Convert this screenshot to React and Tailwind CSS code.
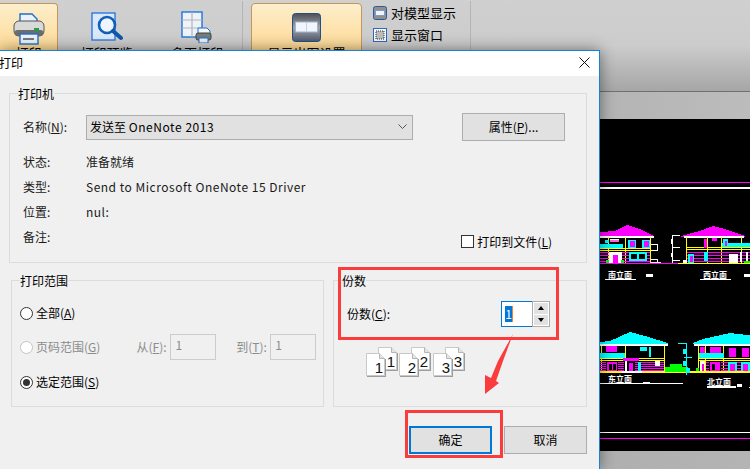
const K = ({ c }) => <span className="underline">{c}</span>;

function PrinterIcon() {
  return (
    <svg width="32" height="32" viewBox="0 0 32 32">
      <path d="M7 1h12l5 5v8H7z" fill="#eaf2fc" stroke="#1f6fd0" strokeWidth="1.4" />
      <rect x="1" y="8" width="30" height="15" rx="5" fill="#d9d9d9" stroke="#555" />
      <rect x="1.5" y="17" width="29" height="6" rx="3" fill="#6c6c6c" />
      <rect x="21" y="15" width="5" height="3" fill="#22a045" />
      <rect x="7" y="21" width="18" height="10" fill="#eaf2fc" stroke="#1f6fd0" strokeWidth="1.4" />
      <rect x="10" y="25" width="11" height="2" fill="#777" />
    </svg>
  );
}

function PreviewIcon() {
  return (
    <svg width="32" height="30" viewBox="0 0 32 30">
      <rect x="1" y="1" width="23" height="27" fill="#dbe8fb" stroke="#1f74dc" strokeWidth="1.3" />
      <circle cx="16" cy="13" r="8" fill="#eef5fe" stroke="#1060b8" strokeWidth="2.6" />
      <path d="M22 19l8 7" stroke="#1058a8" strokeWidth="4" strokeLinecap="round" />
    </svg>
  );
}

function PagesIcon() {
  return (
    <svg width="32" height="32" viewBox="0 0 32 32">
      <rect x="1" y="1" width="20" height="25" fill="#eef3fa" stroke="#1f74dc" strokeWidth="1.4" />
      <path d="M1 9h20M1 17h20M11 1v25" stroke="#b5b5b5" strokeWidth="1.2" />
      <path d="M17 17h9l3 3v5H17z" fill="#f4f7fc" stroke="#1f6fd0" />
      <rect x="15" y="22" width="15" height="7" rx="2" fill="#7a7a7a" stroke="#444" />
      <rect x="18" y="27" width="9" height="5" fill="#e8f0fb" stroke="#1f6fd0" />
      <rect x="26" y="24" width="2" height="1" fill="#22c045" />
    </svg>
  );
}

function DisplayIcon() {
  return (
    <svg width="29" height="29" viewBox="0 0 29 29">
      <defs>
        <linearGradient id="dg" x1="0" y1="0" x2="0" y2="1">
          <stop offset="0" stopColor="#4a4f57" />
          <stop offset="0.5" stopColor="#a5a5a5" />
          <stop offset="1" stopColor="#4e5a6e" />
        </linearGradient>
      </defs>
      <rect x="0.5" y="0.5" width="28" height="28" rx="3" fill="url(#dg)" stroke="#1f4f8f" />
      <rect x="3.5" y="9" width="22" height="10" fill="#f2f5fb" stroke="#9db4d8" />
      <path d="M14.5 9v10" stroke="#c3d0e6" />
    </svg>
  );
}

function SmallModelIcon() {
  return (
    <svg width="14" height="14" viewBox="0 0 14 14">
      <rect x="0.5" y="0.5" width="13" height="13" rx="2" fill="#8f8f8f" stroke="#2a5a9a" />
      <rect x="2.5" y="4.5" width="9" height="5" fill="#f2f5fb" stroke="#7f9cc8" />
    </svg>
  );
}

function SmallWindowIcon() {
  return (
    <svg width="14" height="14" viewBox="0 0 14 14">
      <rect x="0.5" y="0.5" width="13" height="13" fill="#f5f8fd" stroke="#2a6ac0" />
      <rect x="3" y="3" width="8" height="8" fill="#bdbdbd" stroke="#333" strokeDasharray="1 1" />
    </svg>
  );
}

function RibbonButton({ icon, label, active, className }) {
  return (
    <div className={"flex flex-col items-center shrink-0 " + className + (active ? " border border-[#c4985a] rounded-[4px] bg-gradient-to-b from-[#fdeecb] to-[#fdcf78]" : "")}>
      {icon}
      <span className="text-[13px] leading-[16px] text-black whitespace-nowrap">{label}</span>
    </div>
  );
}

function Ribbon() {
  return (
    <div className="h-[92px] flex border-b border-[#707070] bg-gradient-to-b from-[#d0d0d0] via-[#cccccc] to-[#a6a6a6]">
      <RibbonButton active className="w-[58px] h-[70px] mt-[3px] border-l-0 rounded-l-none pt-[9px]" icon={<div className="h-[32px]"><PrinterIcon /></div>} label="打印" />
      <RibbonButton className="w-[99px] pt-[12px] gap-[3px] pr-[2px]" icon={<div className="h-[30px] w-[32px]"><PreviewIcon /></div>} label="打印预览" />
      <RibbonButton className="w-[80px] pt-[11px] gap-[2px]" icon={<div className="h-[32px] w-[32px]"><PagesIcon /></div>} label="多页打印" />
      <div className="w-px h-[86px] ml-[5px] mt-px bg-[#b4b4b4]" />
      <RibbonButton active className="w-[111px] h-[70px] mt-[3px] ml-[8px] pt-[9px] gap-[3px]" icon={<div className="h-[29px]"><DisplayIcon /></div>} label="显示出图设置" />
      <div className="ml-[11px] pt-[5px] flex flex-col gap-[6px] text-[13px] leading-[16px] text-black w-[97px]">
        <div className="flex items-center gap-[4px] whitespace-nowrap"><SmallModelIcon /><span>对模型显示</span></div>
        <div className="flex items-center gap-[4px] whitespace-nowrap"><SmallWindowIcon /><span>显示窗口</span></div>
      </div>
      <div className="w-px h-[86px] mt-px bg-[#b4b4b4]" />
    </div>
  );
}

function CadDrawing() {
  const upper = [
    [0, 63, 150, 1, "#ff00ff"], [0, 68, 150, 2, "#ffffff"], [0, 313, 150, 1, "#ffffff"], [0, 319, 150, 1, "#ff00ff"],
    [0, 117, 54, 2, "#ffffff"], [8, 118, 1, 26, "#ffff00"], [25, 118, 1, 26, "#ffff00"], [50, 118, 1, 26, "#ffff00"],
    [0, 125, 23, 4, "#00ffff"], [0, 129, 51, 1, "#ffff00"], [0, 131, 51, 1, "#ffff00"],
    [0, 133, 50, 1, "#ff00ff"], [0, 136, 50, 1, "#ff00ff"], [0, 139, 50, 1, "#ff00ff"], [0, 142, 50, 1, "#ff00ff"],
    [0, 144, 148, 1, "#ff00ff"], [5, 121, 4, 3, "#00ffff"], [10, 120, 9, 3, "#ff66cc"], [10, 120, 9, 1, "#ffffff"],
    [28, 121, 8, 8, "#00ffff"], [30, 122, 5, 6, "#ff00ff"], [42, 121, 8, 8, "#00ffff"], [44, 122, 5, 6, "#ff00ff"],
    [9, 133, 13, 11, "#ffffff"], [13, 136, 5, 8, "#ff00ff"], [29, 133, 18, 9, "#00ffff"], [31, 135, 6, 5, "#000000"], [39, 135, 6, 5, "#000000"],
    [51, 125, 7, 1, "#ffffff"], [57, 125, 1, 7, "#ffffff"], [51, 131, 7, 1, "#ffffff"], [51, 140, 7, 1, "#ffffff"], [57, 140, 1, 4, "#ffffff"],
    [51, 143, 10, 1, "#ffffff"], [6, 141, 3, 3, "#00ff00"], [21, 141, 3, 3, "#00ff00"],
    [72, 116, 8, 1, "#ffffff"], [72, 116, 1, 28, "#ffffff"], [72, 128, 8, 1, "#ffffff"], [72, 141, 8, 1, "#ffffff"], [71, 120, 2, 5, "#ffffff"], [71, 134, 2, 4, "#ffffff"],
    [84, 117, 60, 2, "#ffffff"], [86, 118, 1, 26, "#ffff00"], [107, 118, 1, 26, "#ffff00"], [121, 118, 1, 26, "#ffff00"], [141, 118, 1, 26, "#ffff00"],
    [87, 128, 63, 1, "#ffff00"], [87, 130, 63, 1, "#ffff00"], [122, 124, 28, 4, "#00ffff"],
    [87, 133, 63, 1, "#ff00ff"], [87, 136, 63, 1, "#ff00ff"], [87, 139, 63, 1, "#ff00ff"], [87, 142, 63, 1, "#ff00ff"], [78, 144, 72, 1, "#ffff00"],
    [104, 120, 3, 9, "#ff00ff"], [112, 119, 5, 3, "#ff00ff"], [123, 120, 5, 7, "#00ffff"], [125, 122, 2, 5, "#ff00ff"],
    [88, 135, 6, 9, "#00ffff"], [90, 137, 3, 6, "#ff00ff"], [104, 133, 4, 9, "#00ffff"], [129, 135, 9, 9, "#ffffff"],
    [83, 141, 4, 3, "#ffffff"], [140, 133, 2, 10, "#ffffff"], [146, 133, 2, 10, "#ffffff"], [144, 142, 6, 2, "#00ff00"],
    [5, 160, 31, 1, "#ffffff"], [46, 155, 7, 3, "#ffffff"], [100, 160, 31, 1, "#ffffff"], [144, 155, 6, 3, "#ffffff"],
    [0, 264, 83, 1, "#ffffff"], [43, 263, 7, 2, "#ffffff"], [107, 267, 29, 2, "#ffffff"], [137, 265, 5, 3, "#ffffff"], [149, 268, 1, 1, "#ffffff"],
  ];
  const lower = [
    [0, 243, 68, 2, "#ffffff"], [1, 245, 1, 27, "#ffff00"], [25, 245, 1, 27, "#ffff00"], [64, 245, 1, 27, "#ffff00"],
    [0, 252, 25, 5, "#00ffff"], [0, 257, 65, 1, "#ffff00"], [0, 259, 65, 1, "#ffff00"],
    [0, 261, 64, 1, "#ff00ff"], [0, 263, 64, 1, "#ff00ff"], [0, 265, 64, 1, "#ff00ff"], [0, 267, 64, 1, "#ff00ff"], [0, 269, 64, 1, "#ff00ff"],
    [0, 270, 150, 2, "#ffff00"], [6, 245, 11, 6, "#ff00ff"], [40, 246, 7, 4, "#00ffff"], [49, 246, 2, 10, "#00ffff"],
    [6, 260, 12, 10, "#000000"], [7, 261, 10, 9, "#ff00ff"], [9, 263, 3, 6, "#000000"], [13, 263, 3, 6, "#000000"],
    [23, 257, 16, 3, "#ff00ff"], [24, 260, 11, 10, "#000000"], [25, 260, 2, 10, "#ffffff"], [29, 262, 4, 8, "#ff00ff"], [38, 261, 3, 9, "#00ffff"],
    [55, 260, 5, 5, "#ffffff"], [22, 270, 20, 2, "#ffffff"],
    [65, 266, 23, 5, "#00ff00"], [70, 263, 12, 3, "#00ff00"], [86, 242, 1, 32, "#00ffff"], [78, 242, 8, 1, "#00ffff"], [84, 256, 8, 1, "#00ffff"], [83, 248, 3, 5, "#00ffff"], [83, 260, 3, 5, "#00ffff"], [86, 267, 4, 5, "#00ffff"],
    [94, 243, 56, 2, "#ffffff"], [98, 245, 1, 26, "#ffff00"], [105, 245, 1, 26, "#ffff00"], [123, 245, 1, 26, "#ffff00"],
    [99, 252, 25, 5, "#00ffff"], [98, 257, 52, 1, "#ffff00"], [98, 259, 52, 1, "#ffff00"],
    [106, 261, 44, 1, "#ff00ff"], [106, 264, 44, 1, "#ff00ff"], [106, 267, 44, 1, "#ff00ff"], [106, 269, 44, 1, "#ff00ff"],
    [100, 246, 5, 6, "#ff00ff"], [110, 246, 11, 6, "#ff00ff"], [129, 247, 7, 9, "#ff00ff"], [142, 247, 7, 9, "#ff00ff"],
    [100, 260, 5, 10, "#ffffff"], [102, 263, 2, 7, "#ff00ff"], [109, 260, 12, 10, "#000000"], [110, 261, 10, 9, "#ff00ff"], [112, 263, 3, 6, "#000000"],
    [128, 261, 9, 9, "#00ffff"], [130, 263, 5, 7, "#ff00ff"], [141, 261, 9, 9, "#00ffff"], [143, 263, 5, 7, "#ff00ff"], [96, 267, 3, 3, "#00ff00"],
  ];
  const labels = [
    [8, 159, "南立面"], [103, 159, "西立面"], [8, 263, "东立面"], [107, 266, "北立面"],
  ];
  const draw = (list) => list.map(([x, y, w, h, c], i) => <rect key={i} x={x} y={y} width={w} height={h} fill={c} />);
  return (
    <svg width="150" height="332" viewBox="0 0 150 332" shapeRendering="crispEdges" className="block">
      <polygon points="0,113 15,112 27,106 40,110 54,117 54,118 0,118" fill="#ff00ff" />
      <polygon points="81,117 100,112 113,107 125,110 145,117 145,118 81,118" fill="#ff00ff" />
      <polygon points="0,223 10,222 30,213 45,217 68,224 68,225 0,225" fill="#00ffff" />
      <polygon points="93,224 103,220 130,214 147,216 150,216 150,225 93,225" fill="#00ffff" />
      {draw(upper)}
      <g transform="translate(0 -18)">{draw(lower)}</g>
      {labels.map(([x, y, t]) => (
        <text key={t} x={x} y={y} fill="#ffffff" fontSize="8" fontWeight="700" style={{ fontFamily: "'Noto Sans CJK SC', sans-serif" }}>{t}</text>
      ))}
    </svg>
  );
}

function Background() {
  return (
    <div className="flex flex-col h-full">
      <Ribbon />
      <div className="h-[27px] bg-gradient-to-r from-[#777777] via-[#a8a8a8] to-[#bcbcbc]" />
      <div className="h-[332px] bg-black flex justify-end overflow-hidden"><CadDrawing /></div>
      <div className="flex-1 bg-gradient-to-r from-[#777777] via-[#a8a8a8] to-[#b4b4b4]" />
    </div>
  );
}

function Group({ title, className, children }) {
  return (
    <div className={"relative border border-[#dcdcdc] " + className}>
      <span className="absolute -top-[8px] left-[8px] bg-[#f0f0f0] leading-[16px] whitespace-nowrap text-black">{title}</span>
      {children}
    </div>
  );
}

function Radio({ checked, disabled }) {
  return (
    <span className={"w-[13px] h-[13px] rounded-full bg-white border flex items-center justify-center shrink-0 " + (disabled ? "border-[#c4c4c4]" : "border-[#333333]")}>
      {checked && <span className="w-[7px] h-[7px] rounded-full bg-[#333333]" />}
    </span>
  );
}

function DisabledInput() {
  return <div className="w-[46px] h-[26px] border border-[#cccccc] px-[4px] leading-[20px] text-[#8c8c8c]">1</div>;
}

function CopyPair({ n }) {
  const Page = ({ x, y, t }) => (
    <g>
      <path d={`M${x + 0.5} ${y + 0.5}h13l5 5v17h-18z`} fill="#ffffff" stroke="#c9c9c9" />
      <path d={`M${x + 13.5} ${y + 0.5}v5h5`} fill="#e4e4e4" stroke="#b5b5b5" />
      <path d={`M${x + 1} ${y + 23.5}h18M${x + 19.5} ${y + 6}v18`} stroke="#9d9d9d" />
      <text x={x + 13} y={y + 20} fontSize="15" fill="#111" textAnchor="middle" style={{ fontFamily: "'Liberation Sans', sans-serif" }}>{t}</text>
    </g>
  );
  return (
    <svg width="32" height="31" viewBox="0 0 32 31" className="shrink-0">
      <Page x={12} y={0} t={n} />
      <Page x={0} y={6} t={n} />
    </svg>
  );
}

function Dialog() {
  return (
    <div className="absolute left-0 top-[50px] w-[600px] h-[419px] bg-[#f0f0f0] border-t border-r border-[#1683d8] shadow-[0_0_14px_rgba(0,0,0,0.45)] text-[12px] leading-[16px] text-[#1a1a1a] flex flex-col">
      <div className="h-[25px] bg-white flex items-center justify-between shrink-0 pr-[9px] pb-[2px]">
        <span className="-ml-px text-black">打印</span>
        <svg width="11" height="11" viewBox="0 0 11 11"><path d="M0.5 0.5l10 10M10.5 0.5l-10 10" stroke="#111" strokeWidth="1" /></svg>
      </div>

      <Group title="打印机" className="ml-[9px] mt-[17px] w-[578px] h-[170px] pl-[13px] pt-[19px] pr-[21px] shrink-0">
        <div className="flex items-center">
          <span className="w-[63px]">名称(<K c="N" />):</span>
          <div className="w-[327px] h-[25px] bg-[#e1e1e1] border border-[#adadad] flex items-center justify-between pl-[3px] pr-[5px]">
            <span className="text-black">发送至 <span className="tracking-[0.55px]">OneNote 2013</span></span>
            <svg width="9" height="6" viewBox="0 0 9 6"><path d="M0.5 0.5l4 4 4-4" fill="none" stroke="#555" /></svg>
          </div>
          <div className="ml-auto w-[103px] h-[28px] bg-[#e1e1e1] border border-[#adadad] flex items-center justify-center text-black"><span>属性(<K c="P" />)...</span></div>
        </div>
        <div className="mt-[8px] grid grid-cols-[63px_1fr] auto-rows-[25px] items-center">
          <span>状态:</span><span>准备就绪</span>
          <span>类型:</span><span className="tracking-[0.5px]">Send to Microsoft OneNote 15 Driver</span>
          <span>位置:</span><span className="tracking-[0.5px]">nul:</span>
          <span>备注:</span>
          <div className="flex justify-end items-center pt-[10px] pr-[13px]">
            <span className="w-[13px] h-[13px] bg-white border border-[#333333] mr-[3px]" />
            <span className="text-black">打印到文件(<K c="L" />)</span>
          </div>
        </div>
      </Group>

      <div className="flex gap-[9px] mt-[17px] ml-[11px] shrink-0">
        <Group title="打印范围" className="w-[313px] h-[127px] pl-[8px] pt-[24px]">
          <div className="flex items-center gap-[3px] h-[16px] text-black"><Radio /><span>全部(<K c="A" />)</span></div>
          <div className="flex items-center mt-[13px] h-[26px] text-[#8c8c8c] w-[296px]">
            <div className="flex items-center gap-[3px] w-[117px]"><Radio disabled /><span>页码范围(<K c="G" />)</span></div>
            <span className="w-[34px]">从(<K c="F" />):</span>
            <DisabledInput />
            <span className="ml-[20px] w-[34px]">到(<K c="T" />):</span>
            <DisabledInput />
          </div>
          <div className="flex items-center gap-[3px] h-[16px] mt-[14px] text-black"><Radio checked /><span>选定范围(<K c="S" />)</span></div>
        </Group>
        <Group title="份数" className="w-[254px] h-[127px] pl-[13px] pt-[20px]">
          <div className="flex items-center h-[26px] w-[216px]">
            <span className="w-[154px] text-black">份数(<K c="C" />):</span>
            <div className="w-[31px] h-[26px] bg-white border border-r-0 border-[#0078d7] flex items-center pl-[3px]">
              <span className="w-[8px] h-[16px] bg-[#0078d7] text-white leading-[16px] text-center border-r border-[#e8853a]">1</span>
            </div>
            <div className="w-[18px] h-[26px] border border-[#acacac] bg-white flex flex-col gap-px p-px">
              <div className="flex-1 bg-[#e1e1e1] flex items-center justify-center"><span className="w-0 h-0 border-x-[3.5px] border-x-transparent border-b-[4px] border-b-black" /></div>
              <div className="flex-1 bg-[#e1e1e1] flex items-center justify-center"><span className="w-0 h-0 border-x-[3.5px] border-x-transparent border-t-[4px] border-t-black" /></div>
            </div>
          </div>
          <div className="flex mt-[20px] ml-[19px]">
            <CopyPair n="1" />
            <div className="ml-[1px]"><CopyPair n="2" /></div>
            <div className="ml-[2px]"><CopyPair n="3" /></div>
          </div>
        </Group>
      </div>

      <div className="flex justify-end gap-[12px] mt-[19px] mr-[12px] shrink-0 text-black">
        <div className="w-[83px] h-[28px] bg-[#e1e1e1] border-2 border-[#0078d7] flex items-center justify-center">确定</div>
        <div className="w-[83px] h-[28px] bg-[#e1e1e1] border border-[#adadad] flex items-center justify-center">取消</div>
      </div>
    </div>
  );
}

export default function App() {
  return (
    <div className="relative w-[750px] h-[469px] overflow-hidden font-['Noto_Sans_CJK_SC',sans-serif]">
      <Background />
      <Dialog />
      <div className="absolute left-[338px] top-[267px] w-[221px] h-[73px] border-[3px] border-[#fb3c3c]" />
      <div className="absolute left-[405px] top-[410px] w-[98px] h-[48px] border-[3px] border-[#fb3c3c]" />
      <svg className="absolute left-[480px] top-[330px]" width="40" height="70" viewBox="480 330 40 70">
        <polygon points="513,334 503,361 496,381 499,383 485,394 485,375 491,378 498,361" fill="#fb3c3c" />
      </svg>
    </div>
  );
}
